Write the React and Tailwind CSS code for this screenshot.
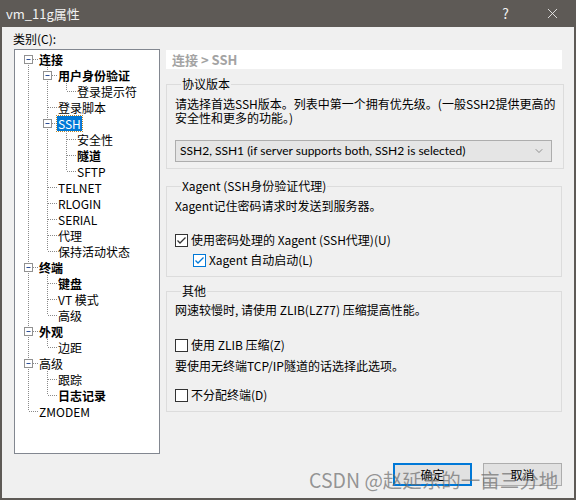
import React from 'react';
import { X, ChevronDown } from 'lucide-react';

const UI = 'font-["Noto_Sans_CJK_SC","Noto_Sans",sans-serif]';

const TREE = [
  {
    label: '连接', bold: true, kids: [
      { label: '用户身份验证', bold: true, kids: [{ label: '登录提示符' }] },
      { label: '登录脚本' },
      { label: 'SSH', selected: true, kids: [{ label: '安全性' }, { label: '隧道', bold: true }, { label: 'SFTP' }] },
      { label: 'TELNET' },
      { label: 'RLOGIN' },
      { label: 'SERIAL' },
      { label: '代理' },
      { label: '保持活动状态' },
    ],
  },
  { label: '终端', bold: true, kids: [{ label: '键盘', bold: true }, { label: 'VT 模式' }, { label: '高级' }] },
  { label: '外观', bold: true, kids: [{ label: '边距' }] },
  { label: '高级', kids: [{ label: '跟踪' }, { label: '日志记录', bold: true }] },
  { label: 'ZMODEM' },
];

// flatten the tree into rows; guides[i] says whether the line at level i keeps going
function flatten(nodes, guides = [], out = [], root = true) {
  nodes.forEach((n, i) => {
    const last = i === nodes.length - 1;
    out.push({ ...n, guides, last, first: root && i === 0 });
    if (n.kids) flatten(n.kids, [...guides, !last], out, false);
  });
  return out;
}

const DOT = { stroke: '#8a8a8a', strokeDasharray: '1 1' };

function Cell({ up, down, stub, box }) {
  return (
    <svg width="19" height="16" className="block shrink-0">
      {up && <line x1="9.5" y1="0" x2="9.5" y2="8" {...DOT} />}
      {down && <line x1="9.5" y1="8" x2="9.5" y2="16" {...DOT} />}
      {stub && <line x1="10" y1="8.5" x2="19" y2="8.5" {...DOT} />}
      {box && (
        <>
          <rect x="5.5" y="4.5" width="8" height="8" fill="#fff" stroke="#919191" />
          <line x1="7.5" y1="8.5" x2="11.5" y2="8.5" stroke="#2e4f96" />
        </>
      )}
    </svg>
  );
}

function TreeRow({ row }) {
  return (
    <div className="flex h-4 items-center">
      {row.guides.map((g, i) => (
        <Cell key={i} up={g} down={g} />
      ))}
      <Cell up={!row.first} down={!row.last} stub box={!!row.kids} />
      <span
        className={
          'px-[1px] text-[12px] leading-[15px] whitespace-nowrap ' +
          (row.bold ? 'font-bold ' : '') +
          (row.selected ? 'bg-[#0078d7] text-white outline outline-1 outline-dotted outline-[#b8862b]' : 'text-black')
        }
      >
        {row.label}
      </span>
    </div>
  );
}

function Check({ checked, hot }) {
  const c = hot ? '#0078d7' : '#333333';
  return (
    <svg width="13" height="13" className="block shrink-0">
      <rect x="0.5" y="0.5" width="12" height="12" fill="#fff" stroke={c} />
      {checked && <path d="M2.5 6.5 L5 9 L10.5 3.5" fill="none" stroke={c} strokeWidth="1.3" />}
    </svg>
  );
}

function Group({ title, children, className = '' }) {
  return (
    <fieldset className={'border border-[#dcdcdc] pl-[8px] pr-[8px] ' + className}>
      <legend className="ml-[6px] px-[1px] text-[12px] leading-[16px]">{title}</legend>
      {children}
    </fieldset>
  );
}

export default function App() {
  const rows = flatten(TREE);
  return (
    <div className={'relative flex h-[500px] w-[576px] flex-col overflow-hidden bg-[#5e5a56] text-black ' + UI}>
      {/* title bar */}
      <div className="flex h-[27px] shrink-0 items-center text-[#f2f2f2]">
        <span className="pl-[6px] text-[13px]">vm_11g属性</span>
        <span className="ml-auto mr-[35px] text-[14px]">?</span>
        <X size={17} strokeWidth={1.2} className="mr-[15px]" />
      </div>

      <div className="mx-[2px] mb-[2px] flex flex-1 flex-col bg-[#f0f0f0]">
        <div className="flex items-start">
          {/* left: category tree */}
          <div className="flex flex-col pl-[11px] pt-[4px]">
            <div className="h-[16px] text-[12px] leading-[16px]">类别(C):</div>
            <div className="ml-[1px] mt-[2px] h-[405px] w-[146px] border border-[#828790] bg-white pl-[4px] pt-[1px]">
              {rows.map((r, i) => (
                <TreeRow key={i} row={r} />
              ))}
            </div>
          </div>

          {/* right: SSH page */}
          <div className="ml-[6px] mt-[23px] flex w-[396px] flex-col">
            <div className="h-[19px] bg-white pl-[6px] text-[13px] font-bold leading-[19px] text-[#a3a3a3]">连接 &gt; SSH</div>

            <Group title="协议版本" className="mt-[7px] pb-[6px]">
              <div className="mt-[5px] whitespace-nowrap text-[12px] leading-[14px]">
                请选择首选SSH版本。列表中第一个拥有优先级。(一般SSH2提供更高的
                <br />
                安全性和更多的功能。)
              </div>
              <div className="mt-[15px] flex h-[22px] w-[377px] items-center border border-[#adadad] bg-[#e5e5e5] pl-[4px] pr-[6px] font-['Lato',sans-serif] text-[12px]">
                <span>SSH2, SSH1 (if server supports both, SSH2 is selected)</span>
                <ChevronDown size={12} strokeWidth={1.2} className="ml-auto text-[#555]" />
              </div>
            </Group>

            <Group title="Xagent (SSH身份验证代理)" className="mt-[9px] pb-[8px]">
              <div className="mt-[4px] h-4 text-[12px] leading-4">Xagent记住密码请求时发送到服务器。</div>
              <div className="mt-[18px] flex h-4 items-center gap-[3px] text-[12px]">
                <Check checked />
                <span>使用密码处理的 Xagent (SSH代理)(U)</span>
              </div>
              <div className="ml-[18px] mt-[4px] flex h-4 items-center gap-[3px] text-[12px]">
                <Check checked hot />
                <span>Xagent 自动启动(L)</span>
              </div>
            </Group>

            <Group title="其他" className="mt-[6px] pb-[8px]">
              <div className="mt-[3px] h-4 text-[12px] leading-4">网速较慢时, 请使用 ZLIB(LZ77) 压缩提高性能。</div>
              <div className="mt-[19px] flex h-4 items-center gap-[3px] text-[12px]">
                <Check />
                <span>使用 ZLIB 压缩(Z)</span>
              </div>
              <div className="mt-[5px] h-4 text-[12px] leading-4">要使用无终端TCP/IP隧道的话选择此选项。</div>
              <div className="mt-[13px] flex h-4 items-center gap-[3px] text-[12px]">
                <Check />
                <span>不分配终端(D)</span>
              </div>
            </Group>
          </div>
        </div>

        {/* buttons */}
        <div className="mt-[9px] flex justify-end gap-[11px] pr-[12px]">
          <button className="h-[23px] w-[79px] border-2 border-[#0078d7] bg-[#e1e1e1] text-[12px]">确定</button>
          <button className="h-[23px] w-[79px] border border-[#adadad] bg-[#e1e1e1] text-[12px]">取消</button>
        </div>
      </div>

      {/* watermark */}
      <div className="pointer-events-none absolute left-[309px] top-[467px] whitespace-nowrap text-[19.5px] leading-[26px] text-[#6b6b6b]/70">
        CSDN @赵延东的一亩三分地
      </div>
    </div>
  );
}
